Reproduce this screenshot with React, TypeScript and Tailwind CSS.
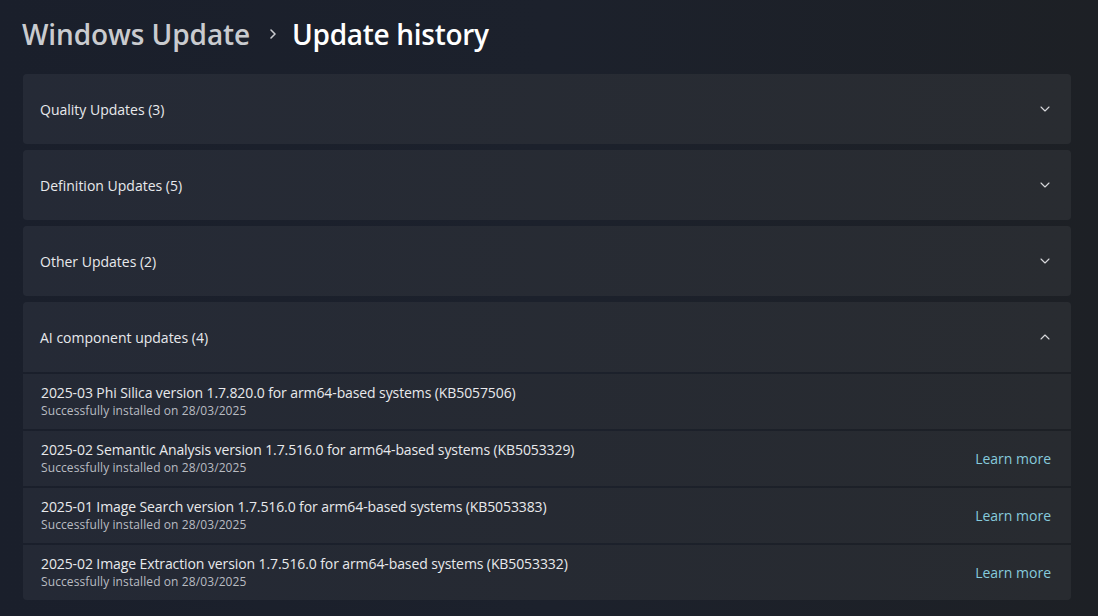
import { ChevronDown, ChevronUp } from "lucide-react";

const groups = [
  { label: "Quality Updates (3)", open: false },
  { label: "Definition Updates (5)", open: false },
  { label: "Other Updates (2)", open: false },
  { label: "AI component updates (4)", open: true },
];

const items = [
  { name: "2025-03 Phi Silica version 1.7.820.0 for arm64-based systems (KB5057506)", link: false },
  { name: "2025-02 Semantic Analysis version 1.7.516.0 for arm64-based systems (KB5053329)", link: true },
  { name: "2025-01 Image Search version 1.7.516.0 for arm64-based systems (KB5053383)", link: true },
  { name: "2025-02 Image Extraction version 1.7.516.0 for arm64-based systems (KB5053332)", link: true },
];

function App() {
  return (
    <div
      className="w-[1098px] h-[616px] overflow-hidden bg-gradient-to-r from-[#1a1f2b] via-[#1c212c] to-[#1d2025] text-white pl-[23px] pr-[27px]"
      style={{ fontFamily: '"Segoe UI", "Open Sans", "Noto Sans", sans-serif' }}
    >
      <div className="flex items-center h-[68px] -ml-[1px] text-[28px] font-semibold tracking-[-0.1px]">
        <span className="text-[#c9cbcf]">Windows Update</span>
        <span className="ml-[17px] mr-[13px] text-[#c9cbcf]">
          <svg width="12" height="12" viewBox="0 0 12 12" fill="none" stroke="currentColor" strokeWidth="1.6" strokeLinecap="round" strokeLinejoin="round">
            <path d="M4 2l4 4-4 4" />
          </svg>
        </span>
        <span className="text-white tracking-[-0.3px]">Update history</span>
      </div>

      <div className="flex flex-col gap-[6px] mt-[6px]">
        {groups.map((g) => (
          <div
            key={g.label}
            className={
              "flex items-center justify-between h-[70px] pl-[17px] pr-[18px] bg-gradient-to-r from-[#252a36] to-[#292c31] " +
              (g.open ? "rounded-t-[4px]" : "rounded-[4px]")
            }
          >
            <span className="text-[14px] text-[#e8e9ec]">{g.label}</span>
            {g.open ? (
              <ChevronUp size={16} strokeWidth={1.6} className="text-[#d8d9dc]" />
            ) : (
              <ChevronDown size={16} strokeWidth={1.6} className="text-[#d8d9dc]" />
            )}
          </div>
        ))}
      </div>

      <div className="flex flex-col gap-[2px] mt-[2px]">
        {items.map((it, i) => (
          <div
            key={it.name}
            className={
              "flex items-center justify-between h-[55px] pl-[18px] pr-[20px] bg-gradient-to-r from-[#242935] to-[#282b30] " +
              (i === items.length - 1 ? "rounded-b-[4px]" : "")
            }
          >
            <div className="flex flex-col leading-tight -mt-[1px]">
              <span className="text-[14px] tracking-[-0.1px] text-[#e8e9ec]">{it.name}</span>
              <span className="text-[12px] tracking-[0.1px] text-[#b9bcc2] mt-[1px]">Successfully installed on 28/03/2025</span>
            </div>
            {it.link && <span className="text-[14px] text-[#86cadc]">Learn more</span>}
          </div>
        ))}
      </div>
    </div>
  );
}

export default App;
